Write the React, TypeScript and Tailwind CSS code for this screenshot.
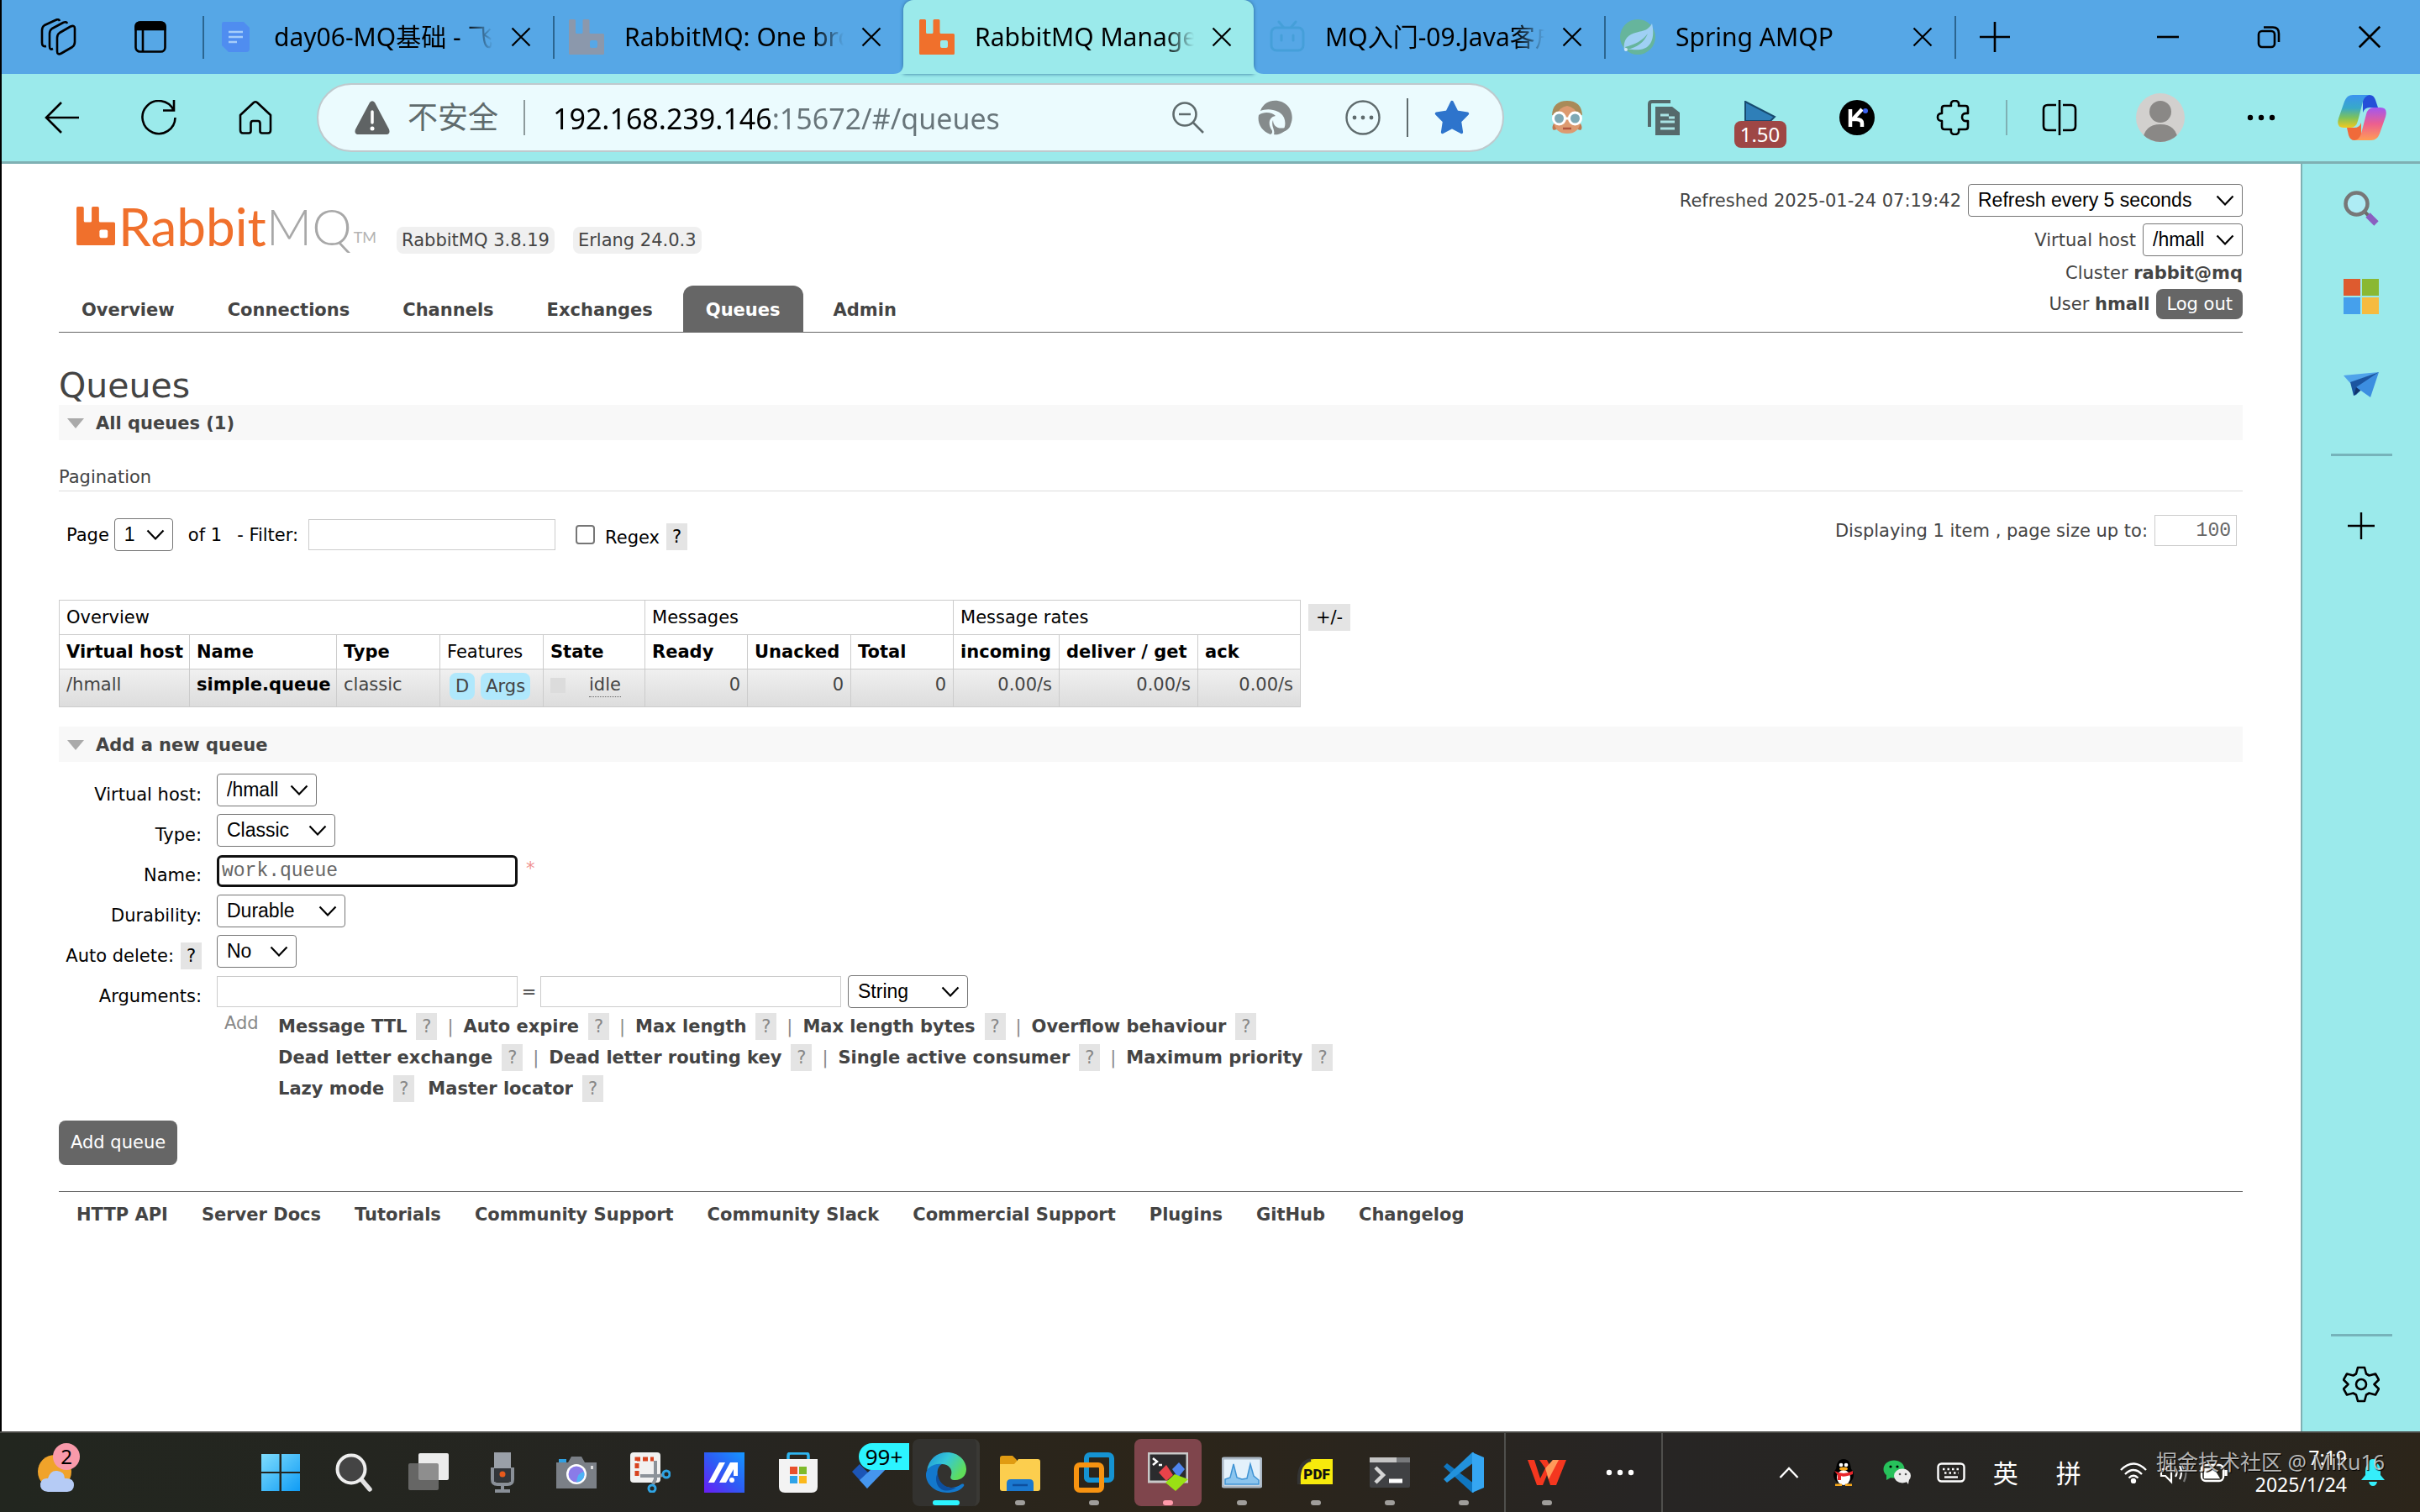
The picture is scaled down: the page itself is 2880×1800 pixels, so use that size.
import React from "react";

const columns = [
  { name: "Virtual host", width: "w-[155px]" },
  { name: "Name", width: "w-[175px]" },
  { name: "Type", width: "w-[123px]" },
  { name: "Features", width: "w-[123px]", plain: true },
  { name: "State", width: "w-[121px]" },
  { name: "Ready", width: "w-[122px]" },
  { name: "Unacked", width: "w-[123px]" },
  { name: "Total", width: "w-[122px]" },
  { name: "incoming", width: "w-[126px]" },
  { name: "deliver / get", width: "w-[165px]" },
  { name: "ack", width: "w-[122px]" },
];

const argumentRows = [
  ["Message TTL", "Auto expire", "Max length", "Max length bytes", "Overflow behaviour"],
  ["Dead letter exchange", "Dead letter routing key", "Single active consumer", "Maximum priority"],
];

const footerLinks = [
  "HTTP API",
  "Server Docs",
  "Tutorials",
  "Community Support",
  "Community Slack",
  "Commercial Support",
  "Plugins",
  "GitHub",
  "Changelog",
];

const RabbitIcon = ({ className, fill, hole }: { className: string; fill: string; hole: string }) => (
  <svg viewBox="0 0 42 42" className={className}>
    <path
      d="M1.500 0H6.500Q8 0 8 1.500V15.500Q8 17 9.500 17H15Q16.500 17 16.500 15.500V1.500Q16.500 0 18 0H23Q24.500 0 24.500 1.500V15.500Q24.500 17 26 17H40.500Q42 17 42 18.500V40.500Q42 42 40.500 42H1.500Q0 42 0 40.500V1.500Q0 0 1.500 0Z"
      fill={fill}
    />
    <rect x="25" y="25" width="9" height="9" rx="2" fill={hole} />
  </svg>
);

const CloseIcon = ({ className = "size-6" }: { className?: string }) => (
  <svg viewBox="0 0 24 24" className={className} fill="none" stroke="#000" strokeWidth="2.200">
    <path d="M1.500 1.500 22.500 22.500M22.500 1.500 1.500 22.500" />
  </svg>
);

const DocIcon = () => (
  <svg viewBox="0 0 42 42" className="size-[42px]">
    <path d="M6 3H30L37 10V35Q37 39 33 39H12L4 31V6Q4 3 6 3Z" fill="#4f8df0" />
    <path d="M12 15H29M12 21H29M12 27H22" stroke="#a5cdfa" strokeWidth="2.500" />
  </svg>
);

const BiliIcon = () => (
  <svg viewBox="0 0 42 42" className="size-[42px]" fill="none" stroke="#459fd9" strokeWidth="3" strokeLinecap="round">
    <path d="M11 3 16 9M31 3 26 9" />
    <rect x="2" y="10" width="38" height="27" rx="6" />
    <path d="M14 19V25M28 19V25" />
  </svg>
);

const SpringIcon = () => (
  <svg viewBox="0 0 42 42" className="size-[42px]">
    <circle cx="21" cy="21" r="21" fill="#66b59c" />
    <path d="M38 5C41 17 40 34 24 36C17 37 12 35 8 36L5 37C4 30 5 22 13 18C23 13 32 16 38 5Z" fill="#9fd0f4" />
    <path d="M8 36C20 34 29 27 33 17C27 25 18 30 6 33Z" fill="#66b59c" />
    <circle cx="7" cy="36" r="2" fill="#cfe8fa" />
  </svg>
);

type TabProps = {
  title: string;
  icon: React.ReactNode;
  active?: boolean;
  divider?: boolean;
};

const Tab = ({ title, icon, active, divider }: TabProps) => (
  <div
    className={
      active
        ? "relative flex h-[88px] w-[417px] items-center rounded-t-xl bg-[#9beaeb] shadow-[0_0_4px_#2a6a94]"
        : "flex h-[88px] w-[417px] items-center"
    }
  >
    {active && (
      <>
        <svg viewBox="0 0 12 12" className="absolute bottom-0 -left-3 size-3">
          <path d="M12 0V12H0Q12 12 12 0Z" fill="#9beaeb" />
        </svg>
        <svg viewBox="0 0 12 12" className="absolute -right-3 bottom-0 size-3">
          <path d="M0 0V12H12Q0 12 0 0Z" fill="#9beaeb" />
        </svg>
      </>
    )}
    <span className={divider ? "h-[51px] w-0.5 bg-[#2b6590]" : "h-[51px] w-0.5"} />
    <span className="ml-[17px] size-[42px] shrink-0">{icon}</span>
    <span className="ml-6 w-[261px] overflow-hidden text-[30px] leading-[44px] whitespace-nowrap text-black [mask-image:linear-gradient(to_right,black_87%,transparent)]">
      {title}
    </span>
    <button aria-label="关闭标签页" className="ml-[21px]">
      <CloseIcon />
    </button>
  </div>
);

const TabStrip = () => (
  <div className="flex h-[88px] items-center bg-[#56a7e6]">
    <button aria-label="工作区" className="ml-11">
      <svg viewBox="0 0 46 44" className="h-11 w-[46px]" fill="none" stroke="#000" strokeWidth="2.600" strokeLinejoin="round">
        <path d="M22 23Q22 19 25 17L38 9.500Q43 7.500 43 12V28Q43 32 40 34L27 41.500Q22 44 22 39Z" />
        <path d="M17 36Q13 38 13 33V18Q13 14 16 12L29 5Q33 3 34 6" />
        <path d="M9 33Q4 34 4 29V14Q4 10 7 8L20 2Q24 0 25 3" />
      </svg>
    </button>
    <button aria-label="标签页操作" className="ml-[68px]">
      <svg viewBox="0 0 38 38" className="size-[38px]" fill="none" stroke="#000" strokeWidth="2.600">
        <rect x="1.500" y="1.500" width="35" height="35" rx="5" />
        <path d="M1.500 7Q1.500 1.500 7 1.500H31Q36.500 1.500 36.500 7V10H1.500Z" fill="#000" />
        <path d="M10 10V36" />
      </svg>
    </button>
    <div className="ml-[43px] flex">
      <Tab title="day06-MQ基础 - 飞书云文档" icon={<DocIcon />} divider />
      <Tab
        title="RabbitMQ: One broker"
        icon={<RabbitIcon className="size-[42px]" fill="#8b98ac" hole="#56a7e6" />}
        divider
      />
      <Tab
        title="RabbitMQ Management"
        icon={<RabbitIcon className="size-[42px]" fill="#f0702c" hole="#9beaeb" />}
        active
      />
      <Tab title="MQ入门-09.Java客户端" icon={<BiliIcon />} />
      <Tab title="Spring AMQP" icon={<SpringIcon />} divider />
    </div>
    <span className="h-[51px] w-0.5 bg-[#2b6590]" />
    <button aria-label="新建标签页" className="ml-[27px]">
      <svg viewBox="0 0 38 38" className="size-[38px]" stroke="#000" strokeWidth="2.600">
        <path d="M19 1V37M1 19H37" />
      </svg>
    </button>
    <div className="ml-auto flex">
      <button aria-label="最小化" className="flex h-11 w-[120px] items-center justify-center">
        <svg viewBox="0 0 28 28" className="size-7" stroke="#000" strokeWidth="2.600">
          <path d="M1 14H27" />
        </svg>
      </button>
      <button aria-label="还原" className="flex h-11 w-[120px] items-center justify-center">
        <svg viewBox="0 0 28 28" className="size-7" fill="none" stroke="#000" strokeWidth="2.600">
          <rect x="2" y="7" width="19" height="19" rx="4" />
          <path d="M8 2.500H19Q26 2.500 26 10V20" />
        </svg>
      </button>
      <button aria-label="关闭" className="flex h-11 w-[120px] items-center justify-center">
        <CloseIcon className="size-7" />
      </button>
    </div>
  </div>
);

const ToolButton = ({ label, className, children }: { label: string; className: string; children: React.ReactNode }) => (
  <button aria-label={label} className={"flex h-[82px] items-center justify-center " + className}>
    {children}
  </button>
);

const CopilotIcon = () => (
  <svg viewBox="0 0 58 54" className="h-[54px] w-[58px]">
    <defs>
      <linearGradient id="cpA" x1="0" y1="0" x2="0" y2="1">
        <stop offset="0" stopColor="#3b93f0" />
        <stop offset="0.400" stopColor="#38a9c8" />
        <stop offset="0.700" stopColor="#7fc25a" />
        <stop offset="1" stopColor="#f2c91f" />
      </linearGradient>
      <linearGradient id="cpB" x1="0" y1="0" x2="0" y2="1">
        <stop offset="0" stopColor="#a257f0" />
        <stop offset="0.500" stopColor="#ec5f8f" />
        <stop offset="1" stopColor="#ff9d55" />
      </linearGradient>
    </defs>
    <path d="M30 0H38Q43 0 45 6L48 15H38Q32 15 30 21Z" fill="#2450d8" />
    <path d="M28 54H20Q15 54 13 48L11 39H20Q26 39 28 33Z" fill="#f06a3a" />
    <path d="M18 0H38Q32 1 30 8L24 31Q22 39 15 39H7Q-2 39 1 28L8 8Q11 0 18 0Z" fill="url(#cpA)" />
    <path d="M40 54H20Q26 53 28 46L34 23Q36 15 43 15H51Q60 15 57 26L50 46Q47 54 40 54Z" fill="url(#cpB)" />
  </svg>
);

const Toolbar = () => (
  <div className="flex h-[107px] items-center border-b-[3px] border-[#7fb0b3] bg-[#9beaeb] pl-3.5">
    <ToolButton label="后退" className="w-[115px]">
      <svg viewBox="0 0 42 42" className="size-[42px]" fill="none" stroke="#000" strokeWidth="2.600">
        <path d="M41 21H2M20 3 2 21 20 39" />
      </svg>
    </ToolButton>
    <ToolButton label="刷新" className="w-[115px]">
      <svg viewBox="0 0 42 42" className="size-[42px]" fill="none" stroke="#000" strokeWidth="2.600">
        <path d="M38.500 12A19.500 19.500 0 1 0 40.500 21M39 0V12.500H26" />
      </svg>
    </ToolButton>
    <ToolButton label="主页" className="w-[115px]">
      <svg viewBox="0 0 42 42" className="size-[42px]" fill="none" stroke="#000" strokeWidth="2.600" strokeLinejoin="round">
        <path d="M3 18 19 3Q21 1.500 23 3L39 18V36Q39 39.500 36 39.500H29Q26.500 39.500 26.500 37V28Q26.500 25 24 25H18Q15.500 25 15.500 28V37Q15.500 39.500 13 39.500H6Q3 39.500 3 36Z" />
      </svg>
    </ToolButton>

    <div className="ml-4 flex h-[82px] flex-1 items-center rounded-full border-2 border-[#bfc9cd] bg-[#ebfbfe] pr-2 pl-[43px]">
      <svg viewBox="0 0 42 40" className="h-10 w-[42px] shrink-0">
        <path d="M18 2Q21-1.500 24 2L41 34Q43 40 37 40H5Q-1 40 1 34Z" fill="#5f6364" />
        <path d="M21 13V26" stroke="#fff" strokeWidth="3.500" strokeLinecap="round" />
        <circle cx="21" cy="33" r="2.500" fill="#fff" />
      </svg>
      <span className="ml-[21px] text-4xl whitespace-nowrap text-[#5f6b6d]">不安全</span>
      <span className="ml-[30px] h-[42px] w-0.5 bg-[#8d9a9c]" />
      <input
        aria-label="地址栏"
        defaultValue="192.168.239.146:15672/#/queues"
        className="ml-[33px] min-w-0 flex-1 bg-[linear-gradient(to_right,#000_262px,#68757a_262px)] bg-clip-text pt-0.5 text-[34px] leading-[50px] text-transparent outline-none"
      />
      <ToolButton label="缩小" className="w-[104px]">
        <svg viewBox="0 0 42 42" className="size-[42px]" fill="none" stroke="#5f6b6d" strokeWidth="2.600">
          <circle cx="17" cy="17" r="13.500" />
          <path d="M27 27 39 39M10 17H24" />
        </svg>
      </ToolButton>
      <ToolButton label="扩展" className="w-[104px]">
        <svg viewBox="0 0 42 42" className="size-[42px]">
          <path d="M3 13C7 2 19-2 30 3C40 8 43 20 39 29C38 34 34 37 29 38C35 30 33 18 24 14C16 10 8 11 3 13Z" fill="#858b8c" />
          <path d="M1 18C8 13 17 15 21 19C13 20 12 29 16 35C18 38 17 40 15 41C4 37-1 27 1 18Z" fill="#858b8c" />
          <path d="M18 24C18 32 25 36 36 32C31 40 23 42 19 41C21 36 15 31 18 24Z" fill="#858b8c" />
        </svg>
      </ToolButton>
      <ToolButton label="更多" className="w-[104px]">
        <svg viewBox="0 0 42 42" className="size-[42px]" fill="#5f6b6d">
          <circle cx="21" cy="21" r="19.500" fill="none" stroke="#5f6b6d" strokeWidth="2.400" />
          <circle cx="11" cy="21" r="2.400" />
          <circle cx="21" cy="21" r="2.400" />
          <circle cx="31" cy="21" r="2.400" />
        </svg>
      </ToolButton>
      <span className="h-[46px] w-0.5 bg-[#5f6b6d]" />
      <ToolButton label="收藏" className="w-[104px]">
        <svg viewBox="0 0 42 42" className="size-[42px]">
          <path
            d="M21 2.500 26.800 14.200 39.500 16.200 30.400 25.400 32.400 38.500 21 32.500 9.600 38.500 11.600 25.400 2.500 16.200 15.200 14.200Z"
            fill="#2e74cc"
            stroke="#2e74cc"
            strokeWidth="3.500"
            strokeLinejoin="round"
          />
        </svg>
      </ToolButton>
    </div>

    <div className="ml-[17px] flex">
      <ToolButton label="用户脚本" className="w-[115px]">
        <svg viewBox="0 0 42 42" className="size-[42px]">
          <path d="M5 28Q2 34 5 36L12 34M37 28Q40 34 37 36L30 34" fill="#c07a50" />
          <path d="M5 16Q5 2 21 2T37 16V26Q35 40 21 40T5 26Z" fill="#dd9a70" />
          <path d="M3 18Q4 1 21 1T39 18L34 19Q30 8 21 7Q12 8 8 19Z" fill="#a98a58" />
          <circle cx="11.500" cy="22" r="7" fill="#7fa9b5" stroke="#fff" strokeWidth="3" />
          <circle cx="30.500" cy="22" r="7" fill="#7fa9b5" stroke="#fff" strokeWidth="3" />
          <path d="M18 22H24" stroke="#fff" strokeWidth="3" />
          <path d="M16 34H26" stroke="#b0553e" strokeWidth="2.500" />
        </svg>
      </ToolButton>
      <ToolButton label="复制助手" className="w-[115px]">
        <svg viewBox="0 0 42 42" className="size-[42px]">
          <path d="M4 32V5Q4 2 7 2H29" fill="none" stroke="#55696b" strokeWidth="4" />
          <path d="M11 8H31L40 15V42H11Z" fill="#55696b" />
          <path d="M17 18H27M17 26H34M17 34H34M27 21H34" stroke="#a9e3e4" strokeWidth="3.200" />
        </svg>
      </ToolButton>
      <ToolButton label="倍速播放" className="w-[115px]">
        <span className="flex flex-col items-center pt-4">
          <svg viewBox="0 0 38 24" className="h-6 w-[38px]">
            <path d="M1 1 36 19 31 24H1Z" fill="#2f7fb8" stroke="#174b70" strokeWidth="2" />
          </svg>
          <span className="flex h-8 w-[62px] items-center justify-center rounded-lg bg-[#9e4745] text-2xl leading-8 text-white">
            1.50
          </span>
        </span>
      </ToolButton>
      <ToolButton label="Kimi" className="w-[115px]">
        <svg viewBox="0 0 42 42" className="size-[42px]">
          <circle cx="21" cy="21" r="21" fill="#000" />
          <path d="M13 11V32M13 23H20Q27 23 27 28V32M17 22 27 11" fill="none" stroke="#fff" strokeWidth="4.500" />
          <circle cx="31" cy="13" r="3" fill="#3b62f0" />
        </svg>
      </ToolButton>
      <ToolButton label="扩展程序" className="w-[115px]">
        <svg viewBox="0 0 42 42" className="size-[42px]" fill="none" stroke="#000" strokeWidth="2.600" strokeLinejoin="round">
          <path d="M10 7H18Q17 1 22.500 1T27 7H35Q38 7 38 10V16Q31 15 31 20.500T38 25V32Q38 35 35 35H27Q28 41 22.500 41T18 35H10Q7 35 7 32V25Q2 25 2 20.500T7 16V10Q7 7 10 7Z" />
        </svg>
      </ToolButton>
    </div>
    <span className="ml-[5px] h-[42px] w-0.5 bg-[#7fb0b3]" />
    <div className="mr-[9px] ml-0.5 flex">
      <ToolButton label="拆分屏幕" className="w-[120px]">
        <svg viewBox="0 0 42 42" className="size-[42px]" fill="none" stroke="#000" strokeWidth="2.600">
          <path d="M21 0V42M17 6H7Q2 6 2 11V31Q2 36 7 36H17M25 6H35Q40 6 40 11V31Q40 36 35 36H25" />
        </svg>
      </ToolButton>
      <ToolButton label="个人资料" className="w-[120px]">
        <svg viewBox="0 0 58 58" className="size-[58px]">
          <defs>
            <clipPath id="avatar">
              <circle cx="29" cy="29" r="29" />
            </clipPath>
          </defs>
          <g clipPath="url(#avatar)">
            <rect width="58" height="58" fill="#d2d0ce" />
            <circle cx="29" cy="22" r="13" fill="#8a8886" />
            <path d="M8 58Q9 37 29 37T50 58Z" fill="#8a8886" />
          </g>
        </svg>
      </ToolButton>
      <ToolButton label="设置及其他" className="w-[120px]">
        <svg viewBox="0 0 34 8" className="h-2 w-[34px]">
          <circle cx="4" cy="4" r="3.200" />
          <circle cx="17" cy="4" r="3.200" />
          <circle cx="30" cy="4" r="3.200" />
        </svg>
      </ToolButton>
      <ToolButton label="Copilot" className="w-[120px]">
        <CopilotIcon />
      </ToolButton>
    </div>
  </div>
);

const Sidebar = () => (
  <aside className="flex w-[142px] flex-col items-center border-l-2 border-[#7fb0b3] bg-[#9beaeb] pt-8 pb-[34px]">
    <button aria-label="搜索">
      <svg viewBox="0 0 42 42" className="size-[42px]" fill="none">
        <path d="M25 25 30 30" stroke="#6b6b6b" strokeWidth="4" />
        <circle cx="15.500" cy="15.500" r="13" fill="#aeecf5" stroke="#777" strokeWidth="4.500" />
        <path d="M29 29 39 39" stroke="#8a5fc0" strokeWidth="7.500" />
      </svg>
    </button>
    <button aria-label="Microsoft 365" className="mt-[63px]">
      <svg viewBox="0 0 42 42" className="size-[42px]">
        <path d="M0 0H20V20H0Z" fill="#de5b2f" />
        <path d="M22 0H42V20H22Z" fill="#8ab833" />
        <path d="M0 22H20V42H0Z" fill="#45a0ec" />
        <path d="M22 22H42V42H22Z" fill="#f6bb40" />
      </svg>
    </button>
    <button aria-label="拖放" className="mt-[63px]">
      <svg viewBox="0 0 42 42" className="size-[42px]">
        <path d="M0 10 42 6 8 19Z" fill="#4fa3ea" />
        <path d="M8 18 42 6 15 33 12 34Z" fill="#1b55a0" />
        <path d="M42 6 32 36 15 24Z" fill="#3c8ee0" />
        <path d="M12 34 15 24 20 28Z" fill="#12356b" />
      </svg>
    </button>
    <span className="mt-[61px] h-[3px] w-[73px] bg-[#76b3ba]" />
    <button aria-label="自定义" className="mt-[67px]">
      <svg viewBox="0 0 32 32" className="size-8" stroke="#000" strokeWidth="2.400">
        <path d="M16 0V32M0 16H32" />
      </svg>
    </button>
    <span className="mt-auto h-[3px] w-[73px] bg-[#76b3ba]" />
    <button aria-label="设置" className="mt-[35px]">
      <svg viewBox="0 0 44 44" className="size-11" fill="none" stroke="#000" strokeWidth="2.600" strokeLinejoin="round">
        <path d="M18 2H26L28 9.500L31.500 11.500L39 9.500L43 16.500L37.500 22L43 27.500L39 34.500L31.500 32.500L28 34.500L26 42H18L16 34.500L12.500 32.500L5 34.500L1 27.500L6.500 22L1 16.500L5 9.500L12.500 11.500L16 9.500Z" />
        <circle cx="22" cy="22" r="6" />
      </svg>
    </button>
  </aside>
);

type PickProps = { id: string; value: string; width: string; label?: string };

const Pick = ({ id, value, width, label }: PickProps) => (
  <span className={"relative inline-flex " + width}>
    <select
      id={id}
      aria-label={label}
      className="h-[39px] w-full appearance-none rounded border border-[#767676] bg-white pl-[11px] font-['Liberation_Sans',sans-serif] text-[23px] leading-[35px] text-black"
    >
      <option>{value}</option>
    </select>
    <svg
      viewBox="0 0 22 14"
      className="pointer-events-none absolute top-[13px] right-2.5 h-3.5 w-[22px]"
      fill="none"
      stroke="#000"
      strokeWidth="2.200"
    >
      <path d="M1.500 1.500 11 11.500 20.500 1.500" />
    </svg>
  </span>
);

const Help = ({ muted }: { muted?: boolean }) => (
  <button
    aria-label="Help"
    className={
      muted
        ? "h-8 w-[25px] bg-[#e4e4e4] text-center leading-8 text-[#888]"
        : "h-8 w-[25px] bg-[#e4e4e4] text-center leading-8 text-black"
    }
  >
    ?
  </button>
);

const SectionTitle = ({ children }: { children: React.ReactNode }) => (
  <h2 className="flex h-[42px] items-center gap-3.5 bg-[#f8f8f8] pt-0.5 pl-2.5 font-bold text-[#444]">
    <svg viewBox="0 0 20 12" className="h-3 w-5">
      <path d="M0 0H20L10 12Z" fill="#aaa" />
    </svg>
    {children}
  </h2>
);

const Header = () => (
  <header className="flex items-stretch justify-between border-b border-[#666]">
    <div className="flex flex-col justify-between pt-[45px]">
      <div className="flex items-end">
        <a href="#/" className="ml-[21px] flex items-center pb-1" aria-label="RabbitMQ home">
          <RabbitIcon className="h-[48px] w-[46px]" fill="#f0702c" hole="#fff" />
          <span className="ml-1 font-[Lato,sans-serif] text-[62px] leading-[58px] text-[#f0702c]">Rabbit</span>
          <span className="font-[Lato,sans-serif] text-[60px] leading-[58px] font-light text-[#a8a8a8]">MQ</span>
          <span className="self-end pb-1 pl-0.5 font-[Lato,sans-serif] text-lg leading-6 text-[#b3b3b3]">TM</span>
        </a>
        <span className="ml-6 rounded-lg bg-[#f0f0f0] px-1.5 leading-8">RabbitMQ 3.8.19</span>
        <span className="ml-[22px] rounded-lg bg-[#f0f0f0] px-1.5 leading-8">Erlang 24.0.3</span>
      </div>
      <nav className="flex gap-[9px] font-bold">
        {["Overview", "Connections", "Channels", "Exchanges", "Queues", "Admin"].map((item) => (
          <a
            key={item}
            href={"#/" + item.toLowerCase()}
            className={
              item === "Queues"
                ? "rounded-t-xl bg-[#666] px-[27px] pt-1 leading-[51px] text-white"
                : "px-[27px] pt-1 leading-[51px]"
            }
          >
            {item}
          </a>
        ))}
      </nav>
    </div>
    <ul className="flex flex-col items-end pt-6 pb-[15px]">
      <li className="flex items-center gap-2">
        <label htmlFor="refresh">Refreshed 2025-01-24 07:19:42</label>
        <Pick id="refresh" value="Refresh every 5 seconds" width="w-[327px]" />
      </li>
      <li className="mt-2 flex items-center gap-2">
        <label htmlFor="vhost">Virtual host</label>
        <Pick id="vhost" value="/hmall" width="w-[119px]" />
      </li>
      <li className="mt-[5px] leading-[30px]">
        Cluster <b>rabbit@mq</b>
      </li>
      <li className="mt-1 flex items-center gap-2">
        <span>
          User <b>hmall</b>
        </span>
        <button className="rounded-lg bg-[#666] px-3 leading-9 text-white">Log out</button>
      </li>
    </ul>
  </header>
);

const Pagination = () => (
  <>
    <h3 className="mt-7 border-b border-[#ddd] leading-8">Pagination</h3>
    <div className="mt-7 flex items-center justify-between pr-[7px] pl-[9px]">
      <div className="flex items-center text-black">
        <label htmlFor="page">Page</label>
        <span className="ml-1.5 flex">
          <Pick id="page" value="1" width="w-[70px]" />
        </span>
        <span className="ml-[18px]">of 1</span>
        <label htmlFor="filter" className="ml-[18px]">
          - Filter:
        </label>
        <input id="filter" className="ml-3 h-[37px] w-[294px] border border-[#ccc] px-1" />
        <input
          id="regex"
          type="checkbox"
          className="ml-6 size-[23px] appearance-none rounded border-2 border-[#767676] bg-white"
        />
        <label htmlFor="regex" className="mr-2 ml-3 pt-1.5">
          Regex
        </label>
        <span className="flex pt-1">
          <Help />
        </span>
      </div>
      <div className="flex items-center gap-2 pb-2.5">
        <label htmlFor="size">Displaying 1 item , page size up to:</label>
        <input
          id="size"
          defaultValue="100"
          className="h-[37px] w-[98px] border border-[#ccc] px-1.5 text-right font-['Liberation_Mono',monospace] text-[23px] text-[#666]"
        />
      </div>
    </div>
  </>
);

const QueueTable = () => (
  <div className="mt-[54px] flex items-start gap-[9px]">
    <table className="w-[1477px] table-fixed border-collapse text-left whitespace-nowrap text-black [&_td]:border [&_td]:border-[#ccc] [&_td]:px-2 [&_th]:border [&_th]:border-[#ccc] [&_th]:px-2">
      <colgroup>
        {columns.map((c) => (
          <col key={c.name} className={c.width} />
        ))}
      </colgroup>
      <thead>
        <tr className="h-[41px]">
          <th colSpan={5} className="font-normal">
            Overview
          </th>
          <th colSpan={3} className="font-normal">
            Messages
          </th>
          <th colSpan={3} className="font-normal">
            Message rates
          </th>
        </tr>
        <tr className="h-[41px]">
          {columns.map((c) => (
            <th key={c.name} className={c.plain ? "font-normal" : "font-bold"}>
              {c.name}
            </th>
          ))}
        </tr>
      </thead>
      <tbody>
        <tr className="h-[45px] bg-linear-to-b from-[#f0f0f0] to-[#dcdcdc] align-top leading-9 text-[#444]">
          <td>/hmall</td>
          <td>
            <a href="#/queues/simple.queue" className="font-bold text-black">
              simple.queue
            </a>
          </td>
          <td>classic</td>
          <td>
            <span className="flex gap-[7px] pt-1 pl-[3px] leading-8">
              <span className="rounded-lg bg-[#b0e8fc] px-[7px]">D</span>
              <span className="rounded-lg bg-[#b0e8fc] px-1.5">Args</span>
            </span>
          </td>
          <td>
            <span className="flex pt-1">
              <span className="mt-1.5 size-[18px] bg-[#dcdcdc]" />
              <span className="ml-7 border-b border-dotted border-[#666] leading-7">idle</span>
            </span>
          </td>
          {["0", "0", "0", "0.00/s", "0.00/s", "0.00/s"].map((v, i) => (
            <td key={i} className="text-right">
              {v}
            </td>
          ))}
        </tr>
      </tbody>
    </table>
    <button className="mt-[5px] h-8 w-[50px] bg-[#e4e4e4] leading-8 text-black">+/-</button>
  </div>
);

const FormRow = ({ id, label, help, children }: { id: string; label: string; help?: boolean; children: React.ReactNode }) => (
  <>
    <div className="flex h-[39px] items-center justify-end gap-2 pt-2.5 text-black">
      <label htmlFor={id}>{label}</label>
      {help && <Help />}
    </div>
    <div className="flex h-[39px] items-center">{children}</div>
  </>
);

const AddQueue = () => (
  <form className="mt-3.5">
    <div className="grid grid-cols-[170px_1fr] gap-x-[18px] gap-y-[9px]">
      <FormRow id="queue-vhost" label="Virtual host:">
        <Pick id="queue-vhost" value="/hmall" width="w-[119px]" />
      </FormRow>
      <FormRow id="type" label="Type:">
        <Pick id="type" value="Classic" width="w-[141px]" />
      </FormRow>
      <FormRow id="name" label="Name:">
        <input
          id="name"
          defaultValue="work.queue"
          className="h-[38px] w-[358px] rounded-md border-[3px] border-[#101010] px-[3px] font-['Liberation_Mono',monospace] text-[23px] text-[#666]"
        />
        <span className="ml-2.5 pb-1.5 text-[#f08f8f]">*</span>
      </FormRow>
      <FormRow id="durability" label="Durability:">
        <Pick id="durability" value="Durable" width="w-[153px]" />
      </FormRow>
      <FormRow id="auto-delete" label="Auto delete:" help>
        <Pick id="auto-delete" value="No" width="w-[95px]" />
      </FormRow>
      <FormRow id="arg-key" label="Arguments:">
        <input id="arg-key" className="h-[37px] w-[358px] border border-[#ccc] px-1" />
        <span className="w-[27px] text-center">=</span>
        <input aria-label="Argument value" className="mr-2 h-[37px] w-[358px] border border-[#ccc] px-1" />
        <Pick id="arg-type" label="Argument type" value="String" width="w-[143px]" />
      </FormRow>
    </div>
    <div className="mt-0.5 ml-[197px] flex text-[#888]">
      <span className="w-[64px] leading-8">Add</span>
      <div className="flex flex-col gap-[5px] pt-1">
        {argumentRows.map((row) => (
          <div key={row[0]} className="flex h-8 items-center">
            {row.map((arg, i) => (
              <React.Fragment key={arg}>
                {i > 0 && <span className="w-[31px] text-center">|</span>}
                <a href="#/queues" className="mr-[11px] font-bold text-[#444]">
                  {arg}
                </a>
                <Help muted />
              </React.Fragment>
            ))}
          </div>
        ))}
        <div className="flex h-8 items-center">
          <a href="#/queues" className="mr-[11px] font-bold text-[#444]">
            Lazy mode
          </a>
          <Help muted />
          <a href="#/queues" className="mr-[11px] ml-4 font-bold text-[#444]">
            Master locator
          </a>
          <Help muted />
        </div>
      </div>
    </div>
    <button type="button" className="mt-[22px] rounded-lg bg-[#666] px-3.5 leading-[53px] text-white">
      Add queue
    </button>
  </form>
);

const ManagementPage = () => (
  <main className="flex-1 bg-white pr-[69px] pl-[68px] font-['DejaVu_Sans',Verdana,sans-serif] text-[21px] leading-[26px] text-[#444]">
    <Header />
    <h1 className="mt-10 text-[41px] leading-[46px]">Queues</h1>
    <SectionTitle>All queues (1)</SectionTitle>
    <Pagination />
    <QueueTable />
    <div className="mt-[23px]">
      <SectionTitle>Add a new queue</SectionTitle>
    </div>
    <AddQueue />
    <footer className="mt-[31px] flex gap-10 border-t border-[#666] pt-3.5 pl-[21px] font-bold">
      {footerLinks.map((l) => (
        <a key={l} href="#/queues">
          {l}
        </a>
      ))}
    </footer>
  </main>
);

type AppButtonProps = { label: string; state?: "running" | "active" | "alert"; children: React.ReactNode };

// one slot of the taskbar, with its running mark under the icon
const AppButton = ({ label, state, children }: AppButtonProps) => (
  <button aria-label={label} className="relative flex h-[94px] w-[88px] shrink-0 items-center justify-center">
    {state === "active" && <span className="absolute inset-x-1 inset-y-[7px] rounded-lg border-r-4 border-[#3a3935] bg-[#33322f]" />}
    {state === "alert" && <span className="absolute inset-x-1 inset-y-[7px] rounded-lg bg-[#7f454c]" />}
    <svg viewBox="0 0 48 48" className="relative size-12">
      {children}
    </svg>
    {state === "active" && <span className="absolute bottom-2 h-1.5 w-8 rounded-full bg-[#2cf4ff]" />}
    {state === "alert" && <span className="absolute bottom-2 h-1.5 w-3 rounded-full bg-[#ff9aaa]" />}
    {state === "running" && <span className="absolute bottom-2 h-1.5 w-3 rounded-full bg-[#a09e9b]" />}
  </button>
);

const Taskbar = () => (
  <div className="relative flex h-24 items-center border-t-2 border-[#4a4a46] bg-[linear-gradient(to_right,#22261f,#262521_30%,#2c2519_48%,#272524_68%,#272622_88%,#2c251a)] text-white">
    <button aria-label="天气" className="relative ml-11">
      <svg viewBox="0 0 46 46" className="size-[46px]">
        <circle cx="21" cy="22" r="20" fill="#f0a32a" />
        <path d="M13 46Q3 45 4 36Q6 29 13 30Q16 20 24 21Q33 22 33 30Q44 29 44 38Q44 45 36 46Z" fill="#b5cbf5" />
      </svg>
      <span className="absolute -top-3 left-[19px] flex size-8 items-center justify-center rounded-full bg-[#f99aaa] text-2xl text-black">
        2
      </span>
    </button>
    <div className="ml-[200px] flex">
      <AppButton label="开始">
        <defs>
          <linearGradient id="win" x1="0" y1="0" x2="1" y2="1">
            <stop offset="0" stopColor="#7fdcfc" />
            <stop offset="1" stopColor="#0f9cf5" />
          </linearGradient>
        </defs>
        <path d="M1 2H22.500V23H1ZM25 2H47V23H25ZM1 25H22.500V46H1ZM25 25H47V46H25Z" fill="url(#win)" />
      </AppButton>
      <AppButton label="搜索">
        <path d="M31 31 42 44" stroke="#e2e2e2" strokeWidth="5.500" strokeLinecap="round" />
        <circle cx="20" cy="20" r="16.500" fill="#444" stroke="#eee" strokeWidth="4" />
      </AppButton>
      <AppButton label="任务视图">
        <rect x="12" y="1" width="36" height="32" rx="2" fill="#ececec" />
        <rect x="0" y="13" width="36" height="32" rx="2" fill="#777" fillOpacity="0.800" />
      </AppButton>
      <AppButton label="录音机">
        <rect x="14" y="0" width="20" height="22" fill="#9aa0a8" />
        <path d="M12 18V32Q12 38 18 38H30Q36 38 36 32V18" fill="none" stroke="#8a9098" strokeWidth="4" />
        <rect x="14" y="19" width="20" height="16" fill="#33363a" />
        <circle cx="24" cy="26" r="3.500" fill="#e85a1c" />
        <path d="M24 38V45M15 46H33" stroke="#8a9098" strokeWidth="4" />
      </AppButton>
      <AppButton label="相机">
        <path d="M3 8H12V14H3Z" fill="#2f9fe0" />
        <path d="M0 12H14L18 5H30L34 12H48V43H0Z" fill="#7b8087" />
        <circle cx="24" cy="26" r="12" fill="#fff" />
        <circle cx="24" cy="26" r="9.500" fill="#8a7be8" />
        <path d="M24 35.500A9.500 9.500 0 0 0 33 23Q25 24 24 35.500Z" fill="#4fb3f5" />
        <path d="M41 16H44V20H41Z" fill="#ddd" />
      </AppButton>
      <AppButton label="截图工具">
        <rect x="0" y="0" width="36" height="36" rx="4" fill="#f1f1f1" />
        <path d="M8 28V8H28" fill="none" stroke="#d8431f" strokeWidth="5" strokeDasharray="6 3" />
        <path d="M30 10V32L27 38M12 28H34L39 27" fill="none" stroke="#8c9299" strokeWidth="4" />
        <circle cx="43" cy="26" r="4" fill="none" stroke="#2fa4e4" strokeWidth="3" />
        <circle cx="26" cy="43" r="4" fill="none" stroke="#2fa4e4" strokeWidth="3" />
      </AppButton>
      <AppButton label="MAA">
        <defs>
          <linearGradient id="maa" x1="1" y1="0" x2="0" y2="1">
            <stop offset="0" stopColor="#1597ff" />
            <stop offset="0.500" stopColor="#2d5cf5" />
            <stop offset="1" stopColor="#6a1cf5" />
          </linearGradient>
        </defs>
        <rect width="48" height="48" fill="url(#maa)" />
        <path d="M5 36 18 12H25L12 36ZM18 36 31 12H40V28H35V20L26 36Z" fill="#fff" />
        <circle cx="33" cy="33" r="3" fill="#fff" />
      </AppButton>
      <AppButton label="Microsoft Store">
        <path d="M12 10V4Q12 1 15 1H33Q36 1 36 4V10" fill="none" stroke="#2fb5f0" strokeWidth="3.500" />
        <path d="M1 8H47V41Q47 48 40 48H8Q1 48 1 41Z" fill="#f3f3f3" />
        <path d="M14 17H23V26H14Z" fill="#e8502b" />
        <path d="M25 17H34V26H25Z" fill="#7fba2a" />
        <path d="M14 28H23V37H14Z" fill="#2ea3e8" />
        <path d="M25 28H34V37H25Z" fill="#fbb81c" />
      </AppButton>
      <div className="relative">
        <AppButton label="待办">
          <path d="M0 23 9 14 23 28 18 43Z" fill="#1c55b5" />
          <path d="M18 43 9 33 38 6 46 14Z" fill="#4596ee" />
        </AppButton>
        <span className="absolute top-3 left-7 flex h-8 w-[60px] items-center justify-center rounded-l-full rounded-br-sm bg-[#2cf4ff] text-[26px] leading-8 text-black">
          99+
        </span>
      </div>
      <AppButton label="Microsoft Edge" state="active">
        <defs>
          <linearGradient id="edgeTop" x1="0" y1="0" x2="1" y2="0.500">
            <stop offset="0" stopColor="#1c8fd8" />
            <stop offset="0.500" stopColor="#35c8d8" />
            <stop offset="1" stopColor="#5fdd5a" />
          </linearGradient>
        </defs>
        <path d="M1 22C3 8 13 0 25 0C39 0 48 10 48 20C48 28 42 33 35 33C30 33 28 31 30 27C32 20 27 14 19 14C10 14 3 18 1 22Z" fill="url(#edgeTop)" />
        <path d="M0 25C2 17 10 13 19 14C13 17 12 27 16 34C20 42 32 45 42 38C44 37 46 38 45 40C41 46 33 48 25 48C10 48-1 37 0 25Z" fill="#1378cc" />
        <path d="M14 25C14 36 24 44 36 42C30 46 22 47 17 43C11 38 11 28 14 25Z" fill="#0d4f9e" />
      </AppButton>
      <AppButton label="文件资源管理器" state="running">
        <path d="M0 7Q0 4 3 4H15L20 9V16H0Z" fill="#e09b12" />
        <path d="M0 14H17L22 8H45Q48 8 48 11V43Q48 46 45 46H3Q0 46 0 43Z" fill="#fcce4e" />
        <path d="M8 46V37Q8 32 13 32H35Q40 32 40 37V46Z" fill="#1a78cf" />
        <path d="M15 39H33" stroke="#0d4f9e" strokeWidth="2.500" />
      </AppButton>
      <AppButton label="VMware" state="running">
        <rect x="15" y="3" width="30" height="30" rx="4" fill="none" stroke="#1593d2" strokeWidth="6" />
        <rect x="3" y="15" width="30" height="30" rx="4" fill="none" stroke="#f79311" strokeWidth="6" />
        <path d="M15 22V29Q15 33 19 33H26" fill="none" stroke="#1593d2" strokeWidth="6" />
      </AppButton>
      <AppButton label="MobaXterm" state="alert">
        <rect x="1" y="1" width="46" height="34" fill="#2b2b2d" stroke="#c9c9c9" strokeWidth="3" />
        <path d="M6 7 11 11 6 15M13 15H17" fill="none" stroke="#fff" strokeWidth="2.500" />
        <path d="M13 24 22 15 30 27 22 34Z" fill="#e8434a" />
        <path d="M29 20 37 12 44 20 36 30Z" fill="#4f85ee" />
        <path d="M21 36 32 26 48 32 33 46Z" fill="#9ae014" />
      </AppButton>
      <AppButton label="任务管理器" state="running">
        <rect x="1" y="7" width="46" height="34" rx="2" fill="#e4f1fb" stroke="#aab7c4" strokeWidth="3" />
        <path d="M4 36V32L10 30L14 14L18 30L24 32L30 31L34 14L38 28L44 33V38H4Z" fill="#8cc5ee" stroke="#3f93d4" strokeWidth="1.500" />
      </AppButton>
      <AppButton label="PDF" state="running">
        <path d="M4 38Q4 8 22 8H44V38Z" fill="#f7ea0c" />
        <path d="M4 38Q2 12 18 9" fill="none" stroke="#333" strokeWidth="4" />
        <text x="25" y="32" textAnchor="middle" fontSize="17" fontWeight="900" fontFamily="Roboto, sans-serif" fill="#111">
          PDF
        </text>
      </AppButton>
      <AppButton label="终端" state="running">
        <rect x="0" y="6" width="48" height="36" rx="2" fill="#404144" />
        <path d="M0 6H48V12H0Z" fill="#c4c4c4" />
        <path d="M32 6H48V12H32Z" fill="#77797c" />
        <path d="M7 18 16 27 7 36" fill="none" stroke="#d5d5d5" strokeWidth="4.500" />
        <path d="M23 34H39" stroke="#fff" strokeWidth="5" />
      </AppButton>
      <AppButton label="Visual Studio Code" state="running">
        <path d="M0 17 4 13 36 37V48L34 48Z" fill="#0f76c0" />
        <path d="M0 32 4 36 36 12V0L34 0Z" fill="#2292dc" />
        <path d="M34 0 48 6V42L34 48Z" fill="#35a6f2" />
      </AppButton>
      <span className="ml-1 h-[94px] w-0.5 bg-[#4f4f4c]" />
      <span className="flex w-[98px] justify-center">
        <AppButton label="WPS" state="running">
          <path d="M1 9H9L16 31L22 19L15 9H24L27 15L31 9H47L35 39H28L24 27L19 39H12Z" fill="#f4371f" />
          <path d="M22 19 31 9H38L26 32Z" fill="#ff9a5a" />
        </AppButton>
      </span>
      <span className="flex w-[76px] justify-center">
        <AppButton label="更多应用">
          <circle cx="11" cy="24" r="3.200" fill="#fff" />
          <circle cx="24" cy="24" r="3.200" fill="#fff" />
          <circle cx="37" cy="24" r="3.200" fill="#fff" />
        </AppButton>
      </span>
      <span className="ml-[11px] h-[94px] w-0.5 bg-[#4f4f4c]" />
    </div>

    <div className="ml-auto flex items-center">
      <button aria-label="显示隐藏的图标" className="flex w-[70px] justify-center">
        <svg viewBox="0 0 24 14" className="h-3.5 w-6" fill="none" stroke="#fff" strokeWidth="2.400">
          <path d="M1.500 13 12 2 22.500 13" />
        </svg>
      </button>
      <button aria-label="QQ" className="flex w-[60px] justify-center">
        <svg viewBox="0 0 28 32" className="h-8 w-7">
          <ellipse cx="14" cy="19" rx="12" ry="11" fill="#000" />
          <path d="M5 15Q5 0 14 0T23 15V20H5Z" fill="#000" />
          <ellipse cx="14" cy="22" rx="8" ry="9" fill="#fff" />
          <circle cx="11" cy="7" r="2.300" fill="#fff" />
          <circle cx="17" cy="7" r="2.300" fill="#fff" />
          <ellipse cx="14" cy="11.500" rx="5" ry="2" fill="#f7a81b" />
          <path d="M3 14Q14 20 25 14V18Q14 22 11 20V25H7V19Z" fill="#e8262b" />
          <path d="M4 31H12M16 31H24" stroke="#f7a81b" strokeWidth="3" />
        </svg>
      </button>
      <button aria-label="微信" className="flex w-[68px] justify-center">
        <svg viewBox="0 0 34 30" className="h-[30px] w-[34px]">
          <ellipse cx="13" cy="11" rx="12.500" ry="10.500" fill="#27c15b" />
          <path d="M4 17 4 24 11 20Z" fill="#27c15b" />
          <ellipse cx="23" cy="19" rx="10" ry="8.500" fill="#ececec" />
          <path d="M27 25 30 29 31 23Z" fill="#ececec" />
          <circle cx="9" cy="8" r="1.600" />
          <circle cx="17" cy="8" r="1.600" />
          <circle cx="20" cy="17" r="1.300" fill="#555" />
          <circle cx="27" cy="17" r="1.300" fill="#555" />
        </svg>
      </button>
      <button aria-label="触摸键盘" className="flex w-[60px] justify-center">
        <svg viewBox="0 0 34 24" className="h-6 w-[34px]" fill="none" stroke="#fff" strokeWidth="2.400">
          <rect x="1.500" y="1.500" width="31" height="21" rx="4" />
          <path d="M7 8H28M9 12.500H26" strokeDasharray="2.500 3" />
          <path d="M9 17.500H25" />
        </svg>
      </button>
      <button className="w-[70px] text-[30px]">英</button>
      <button className="w-20 text-[30px]">拼</button>
      <button aria-label="网络、音量和电源" className="ml-5 flex items-center gap-3.5">
        <svg viewBox="0 0 34 26" className="h-[26px] w-[34px]" fill="none" stroke="#fff" strokeWidth="2.400">
          <path d="M2 10Q17-5 32 10M7 15Q17 5 27 15M11.500 19.500Q17 14 22.500 19.500" />
          <circle cx="17" cy="23" r="2" fill="#fff" />
        </svg>
        <svg viewBox="0 0 34 28" className="h-7 w-[34px]" fill="none" stroke="#fff" strokeWidth="2.200">
          <path d="M2 10H7L14 3V25L7 18H2Z" />
          <path d="M19 9Q22 14 19 19M24 6Q28 14 24 22" />
          <path d="M29 3Q34 14 29 25" stroke="#777" />
        </svg>
        <svg viewBox="0 0 34 26" className="h-[26px] w-[34px]" fill="none" stroke="#fff" strokeWidth="2.400">
          <rect x="2" y="4" width="26" height="19" rx="5" />
          <path d="M31 10V17" strokeWidth="3.500" />
          <path d="M6 19V9H16L22 19Z" fill="#fff" />
        </svg>
      </button>
      <time className="ml-8 flex flex-col items-end pb-[5px] text-[23px] leading-8">
        <span>7:19</span>
        <span>2025/1/24</span>
      </time>
      <button aria-label="通知" className="mr-[42px] ml-[17px]">
        <svg viewBox="0 0 28 32" className="h-8 w-7" fill="#35eefa">
          <path d="M14 0Q19 0 19 5Q23 8 23 14V19L28 25H0L5 19V14Q5 8 9 5Q9 0 14 0Z" />
          <path d="M9 27H19Q18 32 14 32T9 27Z" />
        </svg>
      </button>
    </div>
    <span className="absolute top-4 right-[42px] text-[25px] leading-9 whitespace-nowrap text-white/70 [text-shadow:1px_1px_1px_#000]">
      掘金技术社区 @ Miku16
    </span>
  </div>
);

export default function App() {
  return (
    <div className="flex min-h-screen flex-col font-['Noto_Sans','Noto_Sans_CJK_SC',sans-serif]">
      <div className="flex flex-1 flex-col border-l-2 border-black">
        <TabStrip />
        <Toolbar />
        <div className="flex flex-1">
          <ManagementPage />
          <Sidebar />
        </div>
      </div>
      <Taskbar />
    </div>
  );
}
